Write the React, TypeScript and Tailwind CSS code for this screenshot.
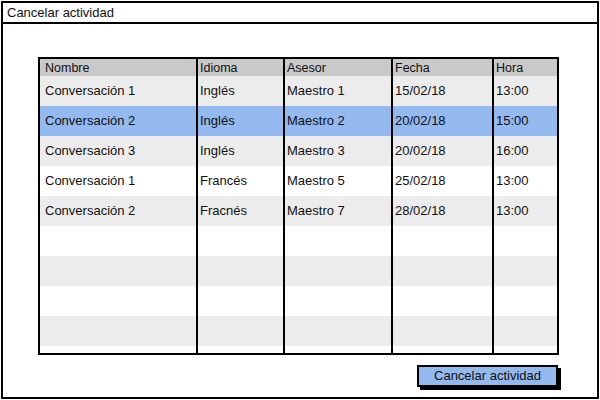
import React from "react";

const rows = [
  { nombre: "Conversación 1", idioma: "Inglés", asesor: "Maestro 1", fecha: "15/02/18", hora: "13:00" },
  { nombre: "Conversación 2", idioma: "Inglés", asesor: "Maestro 2", fecha: "20/02/18", hora: "15:00", selected: true },
  { nombre: "Conversación 3", idioma: "Inglés", asesor: "Maestro 3", fecha: "20/02/18", hora: "16:00" },
  { nombre: "Conversación 1", idioma: "Francés", asesor: "Maestro 5", fecha: "25/02/18", hora: "13:00" },
  { nombre: "Conversación 2", idioma: "Fracnés", asesor: "Maestro 7", fecha: "28/02/18", hora: "13:00" },
  null,
  null,
  null,
  null,
];

const headers = ["Nombre", "Idioma", "Asesor", "Fecha", "Hora"];

const Row = ({ row, index }) => {
  const bg = row?.selected ? "bg-[#93b9ef]" : index % 2 === 0 ? "bg-[#ececec]" : "bg-white";
  const cells = row ? [row.nombre, row.idioma, row.asesor, row.fecha, row.hora] : ["", "", "", "", ""];
  return (
    <div className={`grid grid-cols-[158px_87px_108px_101px_1fr] h-[30px] ${bg}`}>
      {cells.map((c, i) => (
        <div
          key={i}
          className={`flex items-center ${i === 0 ? "pl-[5px]" : "pl-[2px]"} ${i < 4 ? "border-r-2 border-black" : ""}`}
        >
          {c}
        </div>
      ))}
    </div>
  );
};

export default function App() {
  return (
    <div className="w-[600px] h-[400px] bg-white p-px text-[13px] text-[#111]" style={{ fontFamily: '"Liberation Sans", Arial, sans-serif' }}>
      <div className="w-[598px] h-[398px] border-2 border-black flex flex-col">
        {/* Title bar */}
        <div className="h-[21px] border-b-2 border-black flex items-center pl-[4px]">Cancelar actividad</div>

        <div className="ml-[35px] w-[521px] mt-[33px] flex flex-col">
          {/* Table */}
          <div className="border-2 border-black h-[298px] flex flex-col bg-white">
            <div className="grid grid-cols-[158px_87px_108px_101px_1fr] h-[17px] bg-[#c9c9c9] text-[12.5px]">
              {headers.map((h, i) => (
                <div
                  key={h}
                  className={`flex items-center ${i === 0 ? "pl-[5px]" : "pl-[2px]"} ${i < 4 ? "border-r-2 border-black" : ""}`}
                >
                  {h}
                </div>
              ))}
            </div>
            {rows.map((r, i) => (
              <Row key={i} row={r} index={i} />
            ))}
            <div className="grid grid-cols-[158px_87px_108px_101px_1fr] flex-1">
              <div className="border-r-2 border-black" />
              <div className="border-r-2 border-black" />
              <div className="border-r-2 border-black" />
              <div className="border-r-2 border-black" />
              <div />
            </div>
          </div>

          {/* Button */}
          <div className="self-end mt-[10px] mr-[1px] w-[141px] h-[22px] border-2 border-black bg-[#93b9ef] shadow-[3px_3px_0_#000] flex items-center justify-center">
            Cancelar actividad
          </div>
        </div>
      </div>
    </div>
  );
}
